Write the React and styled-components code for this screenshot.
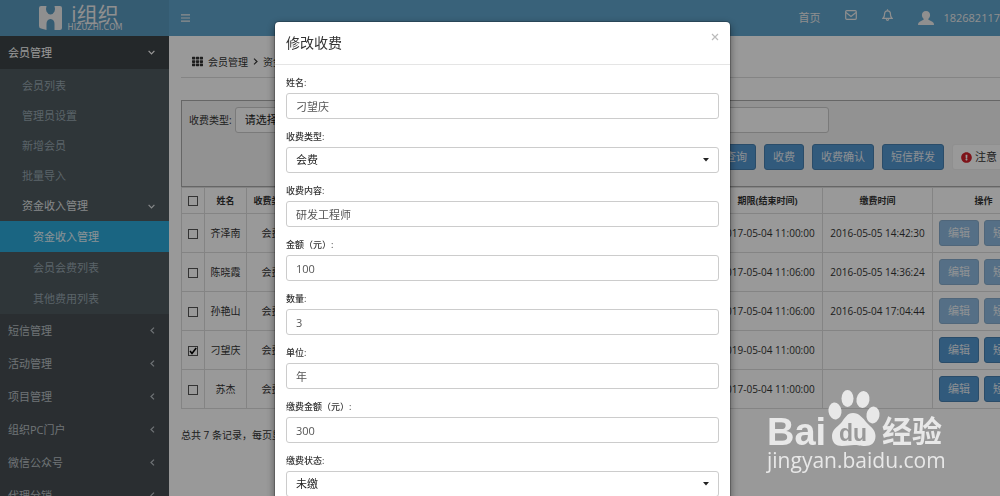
import React from "react";
import styled, { createGlobalStyle, css } from "styled-components";
import { FaTh, FaExclamationCircle } from "react-icons/fa";

const GlobalStyle = createGlobalStyle`
  *, *::before, *::after { box-sizing: border-box; }
  body {
    margin: 0;
    overflow: hidden;
    background: #fff;
    color: #333;
    font: 11px/16px "Open Sans", "Noto Sans CJK SC", sans-serif;
  }
  button, input, select { font: inherit; color: inherit; }
  a { color: inherit; text-decoration: none; }
  ul { list-style: none; margin: 0; padding: 0; }
`;

const Shell = styled.div`
  display: grid;
  grid-template-columns: 169px 1fr;
  grid-template-rows: 36px 1fr;
  min-width: 1035px;
  height: 100vh;
`;

/* ---------- top bar ---------- */

const Brand = styled.a`
  display: flex;
  align-items: center;
  justify-content: center;
  gap: 6px;
  padding-right: 8px;
  background: #5999bf;
  color: #eee;
`;

const BrandText = styled.span`
  display: flex;
  flex-direction: column;
  align-items: center;
`;

const BrandName = styled.span`
  font-size: 21px;
  line-height: 18px;
`;

const BrandDomain = styled.span`
  font: 8px/9px "DejaVu Sans", sans-serif;
`;

const TopBar = styled.header`
  display: flex;
  align-items: center;
  justify-content: space-between;
  padding: 0 35px 0 12px;
  background: #5fa3cb;
  color: #eee;
`;

const IconButton = styled.button`
  display: flex;
  padding: 0;
  border: 0;
  background: none;
  color: inherit;
`;

const NavIcon = styled(IconButton)`
  padding-bottom: 6px;
`;

const TopNav = styled.nav`
  display: flex;
  align-items: center;
  gap: 25px;
`;

const Account = styled.a`
  display: flex;
  align-items: center;
  gap: 9px;
`;

/* ---------- sidebar ---------- */

const Sidebar = styled.nav`
  background: #474e53;
  color: #b9c0c4;
  overflow: hidden;
`;

const MenuLink = styled.a`
  display: flex;
  align-items: center;
  justify-content: space-between;
  height: 33px;
  padding: 0 14px 0 8px;
  ${(p) =>
    p.$open &&
    css`
      background: #3d4346;
      color: #fff;
    `}
`;

const SubMenu = styled.ul`
  padding-top: 2px;
  background: #4f5a5f;
`;

const SubLink = styled.a`
  display: flex;
  align-items: center;
  justify-content: space-between;
  height: 30px;
  padding: 0 14px 0 22px;
  color: ${(p) => (p.$open ? "#e0e4e6" : "#97a7af")};
`;

const LeafLink = styled.a`
  display: flex;
  align-items: center;
  height: 31px;
  padding-left: 33px;
  color: ${(p) => (p.$active ? "#e8f4fa" : "#97a7af")};
  background: ${(p) => (p.$active ? "#2ca9d9" : "transparent")};
`;

/* ---------- page ---------- */

const Page = styled.main`
  padding-left: 12px;
  min-width: 0;
`;

const Breadcrumb = styled.div`
  display: flex;
  align-items: center;
  gap: 5px;
  height: 42px;
  padding: 10px 0 0 11px;
  border-bottom: 1px solid #ddd;
  font-size: 10px;
`;

const FilterPanel = styled.form`
  margin-top: 22px;
  height: 87px;
  padding: 6px 28px 0 7px;
  border: 1px solid #aaa;
  background: #f4f4f4;
`;

const FilterRow = styled.div`
  display: flex;
  align-items: center;
  gap: 3px;
  max-width: 640px;
  label {
    flex: none;
    font-size: 10px;
  }
`;

const ButtonRow = styled.div`
  display: flex;
  justify-content: flex-end;
  gap: 8px;
  margin-top: 11px;
`;

const control = css`
  height: 26px;
  padding: 0 9px;
  border: 1px solid #ccc;
  border-radius: 3px;
  background: #fff;
`;

const TextInput = styled.input`
  ${control}
  width: 100%;
  color: #555;
`;

const Select = styled.select`
  ${control}
  flex: none;
  width: ${(p) => p.$width || "100%"};
  appearance: none;
  color: #222;
`;

const Button = styled.button`
  display: inline-flex;
  align-items: center;
  justify-content: center;
  gap: 3px;
  height: 26px;
  padding: 0 8px;
  border: 1px solid #467fb0;
  border-radius: 3px;
  background: #5396cf;
  color: #e8eef4;
  white-space: nowrap;
  &:disabled { opacity: 0.65; }
  ${(p) =>
    p.$plain &&
    css`
      border-color: #eee;
      background: #fff;
      color: #333;
      svg { color: #d3202a; }
    `}
`;

const Table = styled.table`
  width: 100%;
  table-layout: fixed;
  border-collapse: collapse;
  font-size: 10px;
  th, td {
    height: 39px;
    padding: 0;
    border: 1px solid #ddd;
    text-align: center;
    white-space: nowrap;
    overflow: hidden;
  }
  th { height: 26px; font-size: 9px; font-weight: 700; }
  tr > :first-child input { display: block; margin: 1px auto 0; }
`;

const Tick = styled.input`
  appearance: none;
  width: 10px;
  height: 10px;
  border: 1px solid #555;
  background: #fff no-repeat center;
  &:checked {
    background-image: url("data:image/svg+xml,%3Csvg xmlns='http://www.w3.org/2000/svg' viewBox='0 0 8 8'%3E%3Cpath d='M1 4l2 2.5L7.2 1' fill='none' stroke='%23000' stroke-width='1.6'/%3E%3C/svg%3E");
  }
`;

const RowActions = styled.div`
  display: flex;
  gap: 5px;
  padding-left: 6px;
  font-size: 11px;
`;

const Summary = styled.p`
  margin: 18px 0 0;
  font-size: 10px;
`;

/* ---------- dialog ---------- */

const Backdrop = styled.div`
  position: fixed;
  inset: 0;
  padding: 22px 0 0 5px;
  overflow: hidden;
  background: rgba(0, 0, 0, 0.4);
`;

const Dialog = styled.section`
  width: 455px;
  max-width: 100%;
  margin: 0 auto;
  border-radius: 4px;
  background: #fff;
  box-shadow: 0 3px 9px rgba(0, 0, 0, 0.5), 0 0 0 1px rgba(0, 0, 0, 0.2);
`;

const DialogHeader = styled.header`
  display: flex;
  justify-content: space-between;
  height: 43px;
  padding: 11px 11px 0;
  border-bottom: 1px solid #e5e5e5;
  h2 {
    margin: 0;
    font-size: 14px;
    line-height: 20px;
    font-weight: 400;
  }
`;

const CloseButton = styled.button`
  display: flex;
  width: 8px;
  height: 8px;
  padding: 0;
  border: 0;
  background: none;
  color: #bbb;
`;

const DialogBody = styled.form`
  padding: 10px 11px;
`;

const Field = styled.div`
  margin-bottom: 10px;
  label {
    display: block;
    margin-bottom: 2px;
    font-size: 9px;
    font-weight: 500;
  }
`;

const SelectBox = styled.div`
  position: relative;
  svg {
    position: absolute;
    right: 10px;
    top: 11px;
    pointer-events: none;
  }
`;

/* ---------- watermark ---------- */

const Watermark = styled.svg`
  position: fixed;
  right: 54px;
  bottom: 20px;
  fill: #e8e8e8;
  pointer-events: none;
`;

const HMark = () => (
  <svg width="23" height="24" viewBox="0 0 23 24" fill="currentColor" aria-hidden="true">
    <path d="M2 0H7.500Q6.500 3 7.500 5.500Q9 8.500 11.500 8.500Q14 8.500 15.500 5.500Q16.500 3 15.500 0H21Q23 0 23 2V22Q23 24 21 24H15.500V18Q15.500 13.500 11.500 13Q7.500 13.500 7.500 18V24L2 22.500Q0 22 0 20V2Q0 0 2 0Z" />
  </svg>
);

const Person = () => (
  <svg width="16" height="14" viewBox="0 0 16 14" fill="currentColor" aria-hidden="true">
    <path d="M8 0C5.300 0 3.900 1.800 3.900 4C3.900 5.700 4.700 7.200 5.800 8C5.600 9 4.500 9.300 3 9.900C1 10.700 0 11.500 0 14H16C16 11.500 15 10.700 13 9.900C11.500 9.300 10.400 9 10.200 8C11.300 7.200 12.100 5.700 12.100 4C12.100 1.800 10.700 0 8 0Z" />
  </svg>
);

const Line = styled.svg`
  flex: none;
  fill: none;
  stroke: currentColor;
  stroke-width: 1.2;
`;

const Bars = () => (
  <Line width="9" height="8" viewBox="0 0 9 8" aria-hidden="true">
    <path d="M0 0.900H9M0 4H9M0 7.100H9" />
  </Line>
);

const Cross = () => (
  <Line width="8" height="8" viewBox="0 0 8 8" aria-hidden="true">
    <path d="M1 1L7 7M7 1L1 7" />
  </Line>
);

const Envelope = () => (
  <Line width="12" height="10" viewBox="0 0 12 10" aria-hidden="true">
    <rect x="0.700" y="0.700" width="10.600" height="8.600" rx="1" />
    <path d="M1 2.500L6 6.500L11 2.500" />
  </Line>
);

const Bell = () => (
  <Line width="11" height="12" viewBox="0 0 11 12" aria-hidden="true">
    <path d="M1 9.300Q2.600 7.800 2.600 4.800Q2.600 1.800 5.500 1.800Q8.400 1.800 8.400 4.800Q8.400 7.800 10 9.300Z" />
    <path d="M5.500 0.300V1.800M4.300 10.200Q4.500 11.300 5.500 11.300Q6.500 11.300 6.700 10.200" />
  </Line>
);

const chevrons = {
  down: { size: [7, 5], d: "M0.600 0.800L3.500 3.800L6.400 0.800" },
  left: { size: [5, 7], d: "M4 0.600L1 3.500L4 6.400" },
  right: { size: [5, 7], d: "M1 0.600L4 3.500L1 6.400" },
};

const Chevron = ({ to }) => {
  const { size, d } = chevrons[to];
  return (
    <Line width={size[0]} height={size[1]} viewBox={`0 0 ${size[0]} ${size[1]}`} aria-hidden="true">
      <path d={d} />
    </Line>
  );
};

const Caret = () => (
  <svg width="6" height="4" viewBox="0 0 6 4" aria-hidden="true">
    <path d="M0 0H6L3 3.500Z" fill="#222" />
  </svg>
);

const members = ["会员列表", "管理员设置", "新增会员", "批量导入"];
const leaves = ["资金收入管理", "会员会费列表", "其他费用列表"];
const sections = ["短信管理", "活动管理", "项目管理", "组织PC门户", "微信公众号", "代理分销"];

const rows = [
  { name: "齐泽南", end: "2017-05-04 11:00:00", paid: "2016-05-05 14:42:30" },
  { name: "陈晓霞", end: "2017-05-04 11:06:00", paid: "2016-05-05 14:36:24" },
  { name: "孙艳山", end: "2017-05-04 11:06:00", paid: "2016-05-04 17:04:44" },
  { name: "刁望庆", end: "2019-05-04 11:00:00", checked: true },
  { name: "苏杰", end: "2017-05-04 11:00:00" },
];

const fields = [
  { id: "name", label: "姓名:", value: "刁望庆" },
  { id: "type", label: "收费类型:", value: "会费", select: true },
  { id: "content", label: "收费内容:", value: "研发工程师" },
  { id: "amount", label: "金额（元）:", value: "100" },
  { id: "count", label: "数量:", value: "3" },
  { id: "unit", label: "单位:", value: "年" },
  { id: "total", label: "缴费金额（元）:", value: "300" },
  { id: "status", label: "缴费状态:", value: "未缴", select: true },
];

export default function App() {
  return (
    <>
      <GlobalStyle />
      <Shell>
        <Brand href="#home">
          <HMark />
          <BrandText>
            <BrandName>i组织</BrandName>
            <BrandDomain>HIZUZHI.COM</BrandDomain>
          </BrandText>
        </Brand>
        <TopBar>
          <IconButton type="button" aria-label="菜单">
            <Bars />
          </IconButton>
          <TopNav>
            <a href="#index">首页</a>
            <NavIcon type="button" aria-label="消息">
              <Envelope />
            </NavIcon>
            <NavIcon type="button" aria-label="通知">
              <Bell />
            </NavIcon>
            <Account href="#account">
              <Person />
              182682117
            </Account>
          </TopNav>
        </TopBar>

        <Sidebar>
          <MenuLink href="#members" $open>
            会员管理
            <Chevron to="down" />
          </MenuLink>
          <SubMenu>
            {members.map((m) => (
              <li key={m}>
                <SubLink href="#sub">{m}</SubLink>
              </li>
            ))}
            <li>
              <SubLink href="#income" $open>
                资金收入管理
                <Chevron to="down" />
              </SubLink>
              <ul>
                {leaves.map((l, i) => (
                  <li key={l}>
                    <LeafLink href="#leaf" $active={i === 0}>
                      {l}
                    </LeafLink>
                  </li>
                ))}
              </ul>
            </li>
          </SubMenu>
          {sections.map((s) => (
            <MenuLink key={s} href="#section">
              {s}
              <Chevron to="left" />
            </MenuLink>
          ))}
        </Sidebar>

        <Page>
          <Breadcrumb>
            <FaTh size={11} />
            <a href="#members">会员管理</a>
            <Chevron to="right" />
            <a href="#income">资金收入管理</a>
          </Breadcrumb>
          <FilterPanel>
            <FilterRow>
              <label htmlFor="filter-type">收费类型:</label>
              <Select id="filter-type" $width="160px">
                <option>请选择</option>
              </Select>
              <TextInput aria-label="关键字" />
            </FilterRow>
            <ButtonRow>
              <Button type="button">查询</Button>
              <Button type="button">收费</Button>
              <Button type="button">收费确认</Button>
              <Button type="button">短信群发</Button>
              <Button type="button" $plain>
                <FaExclamationCircle />
                注意
              </Button>
            </ButtonRow>
          </FilterPanel>
          <Table>
            <colgroup>
              <col width="23" />
              <col width="42" />
              <col width="50" />
              <col />
              <col width="110" />
              <col width="110" />
              <col width="102" />
            </colgroup>
            <thead>
              <tr>
                <th>
                  <Tick type="checkbox" aria-label="全选" />
                </th>
                <th>姓名</th>
                <th>收费类型</th>
                <th />
                <th>期限(结束时间)</th>
                <th>缴费时间</th>
                <th>操作</th>
              </tr>
            </thead>
            <tbody>
              {rows.map((r) => (
                <tr key={r.name}>
                  <td>
                    <Tick type="checkbox" aria-label={r.name} defaultChecked={r.checked} />
                  </td>
                  <td>{r.name}</td>
                  <td>会费</td>
                  <td />
                  <td>{r.end}</td>
                  <td>{r.paid}</td>
                  <td>
                    <RowActions>
                      <Button type="button" disabled={Boolean(r.paid)}>
                        编辑
                      </Button>
                      <Button type="button" disabled={Boolean(r.paid)}>
                        短信
                      </Button>
                    </RowActions>
                  </td>
                </tr>
              ))}
            </tbody>
          </Table>
          <Summary>总共 7 条记录，每页显示</Summary>
        </Page>
      </Shell>

      <Backdrop>
        <Dialog role="dialog" aria-labelledby="dialog-title">
          <DialogHeader>
            <h2 id="dialog-title">修改收费</h2>
            <CloseButton type="button" aria-label="关闭">
              <Cross />
            </CloseButton>
          </DialogHeader>
          <DialogBody>
            {fields.map((f) => (
              <Field key={f.id}>
                <label htmlFor={f.id}>{f.label}</label>
                {f.select ? (
                  <SelectBox>
                    <Select id={f.id}>
                      <option>{f.value}</option>
                    </Select>
                    <Caret />
                  </SelectBox>
                ) : (
                  <TextInput id={f.id} defaultValue={f.value} />
                )}
              </Field>
            ))}
          </DialogBody>
        </Dialog>
      </Backdrop>

      <Watermark width="180" height="90" viewBox="0 0 180 90" aria-label="Baidu 经验">
        <text x="1" y="59" fontFamily="Liberation Sans, sans-serif" fontWeight="700" fontSize="38">
          Bai
        </text>
        <ellipse cx="69" cy="25" rx="6.500" ry="8.500" transform="rotate(-8 69 25)" />
        <ellipse cx="81.500" cy="12.500" rx="6" ry="8.500" />
        <ellipse cx="97" cy="13.500" rx="6.500" ry="8.500" transform="rotate(10 97 13.500)" />
        <ellipse cx="107" cy="29" rx="6.500" ry="8.500" transform="rotate(10 107 29)" />
        <path d="M87 27C93 27 97 32 101 37C105 41 109.500 44 109.500 50C109.500 57 105 60 99 60C94 60 92 59 88 59C84 59 81 60 76 60C70 60 66 57 66 50C66 44 71 41 75 37C79 32 81 27 87 27Z" />
        <text
          x="87"
          y="55"
          textAnchor="middle"
          fill="#999"
          fontFamily="Liberation Sans, sans-serif"
          fontWeight="700"
          fontSize="23"
        >
          du
        </text>
        <text x="116" y="56" fontFamily="Noto Sans CJK SC, sans-serif" fontWeight="700" fontSize="30">
          经验
        </text>
        <text x="1" y="82" fontFamily="Open Sans, sans-serif" fontSize="21">
          jingyan.baidu.com
        </text>
      </Watermark>
    </>
  );
}
